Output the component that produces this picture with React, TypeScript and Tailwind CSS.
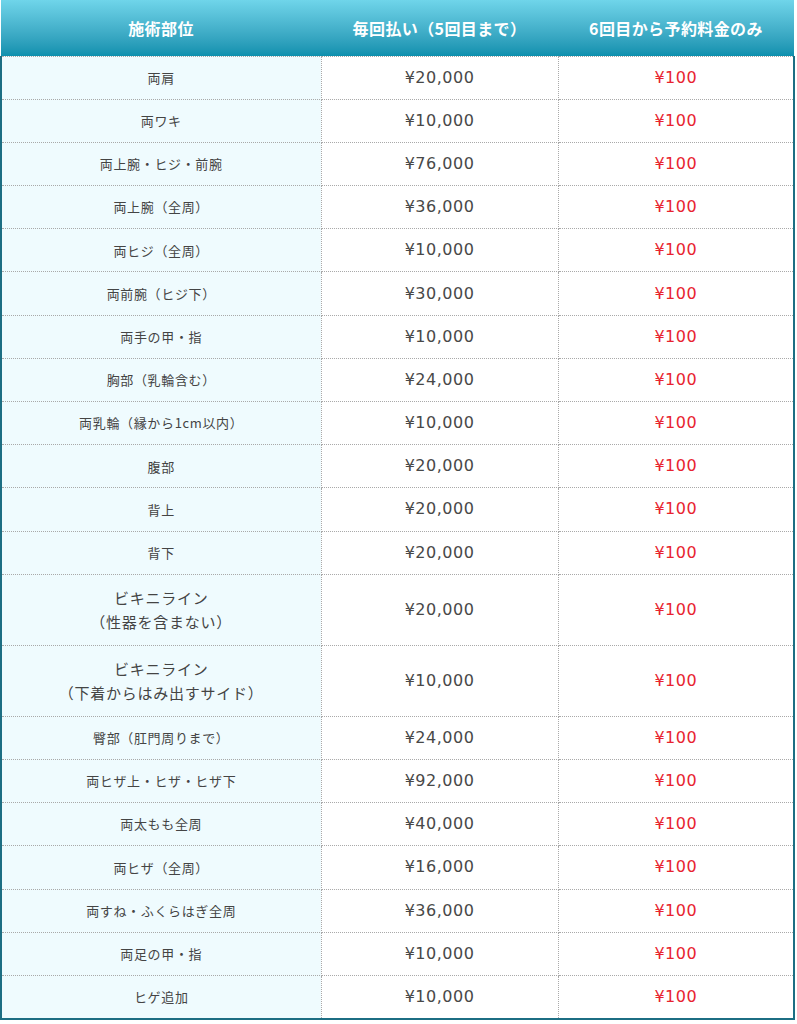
const rows: { part: string[]; price: string; tall?: boolean }[] = [
  { part: ["両肩"], price: "¥20,000" },
  { part: ["両ワキ"], price: "¥10,000" },
  { part: ["両上腕・ヒジ・前腕"], price: "¥76,000" },
  { part: ["両上腕（全周）"], price: "¥36,000" },
  { part: ["両ヒジ（全周）"], price: "¥10,000" },
  { part: ["両前腕（ヒジ下）"], price: "¥30,000" },
  { part: ["両手の甲・指"], price: "¥10,000" },
  { part: ["胸部（乳輪含む）"], price: "¥24,000" },
  { part: ["両乳輪（縁から1cm以内）"], price: "¥10,000" },
  { part: ["腹部"], price: "¥20,000" },
  { part: ["背上"], price: "¥20,000" },
  { part: ["背下"], price: "¥20,000" },
  { part: ["ビキニライン", "（性器を含まない）"], price: "¥20,000", tall: true },
  { part: ["ビキニライン", "（下着からはみ出すサイド）"], price: "¥10,000", tall: true },
  { part: ["臀部（肛門周りまで）"], price: "¥24,000" },
  { part: ["両ヒザ上・ヒザ・ヒザ下"], price: "¥92,000" },
  { part: ["両太もも全周"], price: "¥40,000" },
  { part: ["両ヒザ（全周）"], price: "¥16,000" },
  { part: ["両すね・ふくらはぎ全周"], price: "¥36,000" },
  { part: ["両足の甲・指"], price: "¥10,000" },
  { part: ["ヒゲ追加"], price: "¥10,000" },
];

const font = { fontFamily: '"Noto Sans CJK JP", "Noto Sans", sans-serif' };
const priceFont = { fontFamily: '"DejaVu Sans", "Noto Sans CJK JP", sans-serif' };

export default function App() {
  return (
    <div className="w-[797px] bg-white" style={font}>
      <table className="w-[793px] table-fixed border-collapse">
        <colgroup>
          <col className="w-[320px]" />
          <col className="w-[237px]" />
          <col className="w-[236px]" />
        </colgroup>
        <thead>
          <tr className="h-[56px] bg-gradient-to-b from-[#6fd5ea] to-[#0b90ae] text-white text-[16px] font-bold tracking-wide">
            <th className="font-bold">施術部位</th>
            <th className="font-bold">毎回払い（5回目まで）</th>
            <th className="font-bold">6回目から予約料金のみ</th>
          </tr>
        </thead>
        <tbody className="border-x-2 border-b-2 border-[#1c6e83]">
          {rows.map((r) => (
            <tr key={r.part.join("")} className={r.tall ? "h-[71px]" : "h-[43.2px]"}>
              <td
                className={`border border-dotted border-[#a9a9a9] bg-[#effbfe] text-center text-[#444] tracking-wider ${
                  r.tall ? "text-[15px] leading-[24px]" : "text-[13px]"
                }`}
              >
                {r.part.map((p) => (
                  <div key={p}>{p}</div>
                ))}
              </td>
              <td
                className="border border-dotted border-[#a9a9a9] text-center text-[16px] text-[#484848] tracking-[0.5px]"
                style={priceFont}
              >
                {r.price}
              </td>
              <td
                className="border border-dotted border-[#a9a9a9] text-center text-[16px] text-[#e8232f] tracking-[0.5px]"
                style={priceFont}
              >
                ¥100
              </td>
            </tr>
          ))}
        </tbody>
      </table>
    </div>
  );
}
